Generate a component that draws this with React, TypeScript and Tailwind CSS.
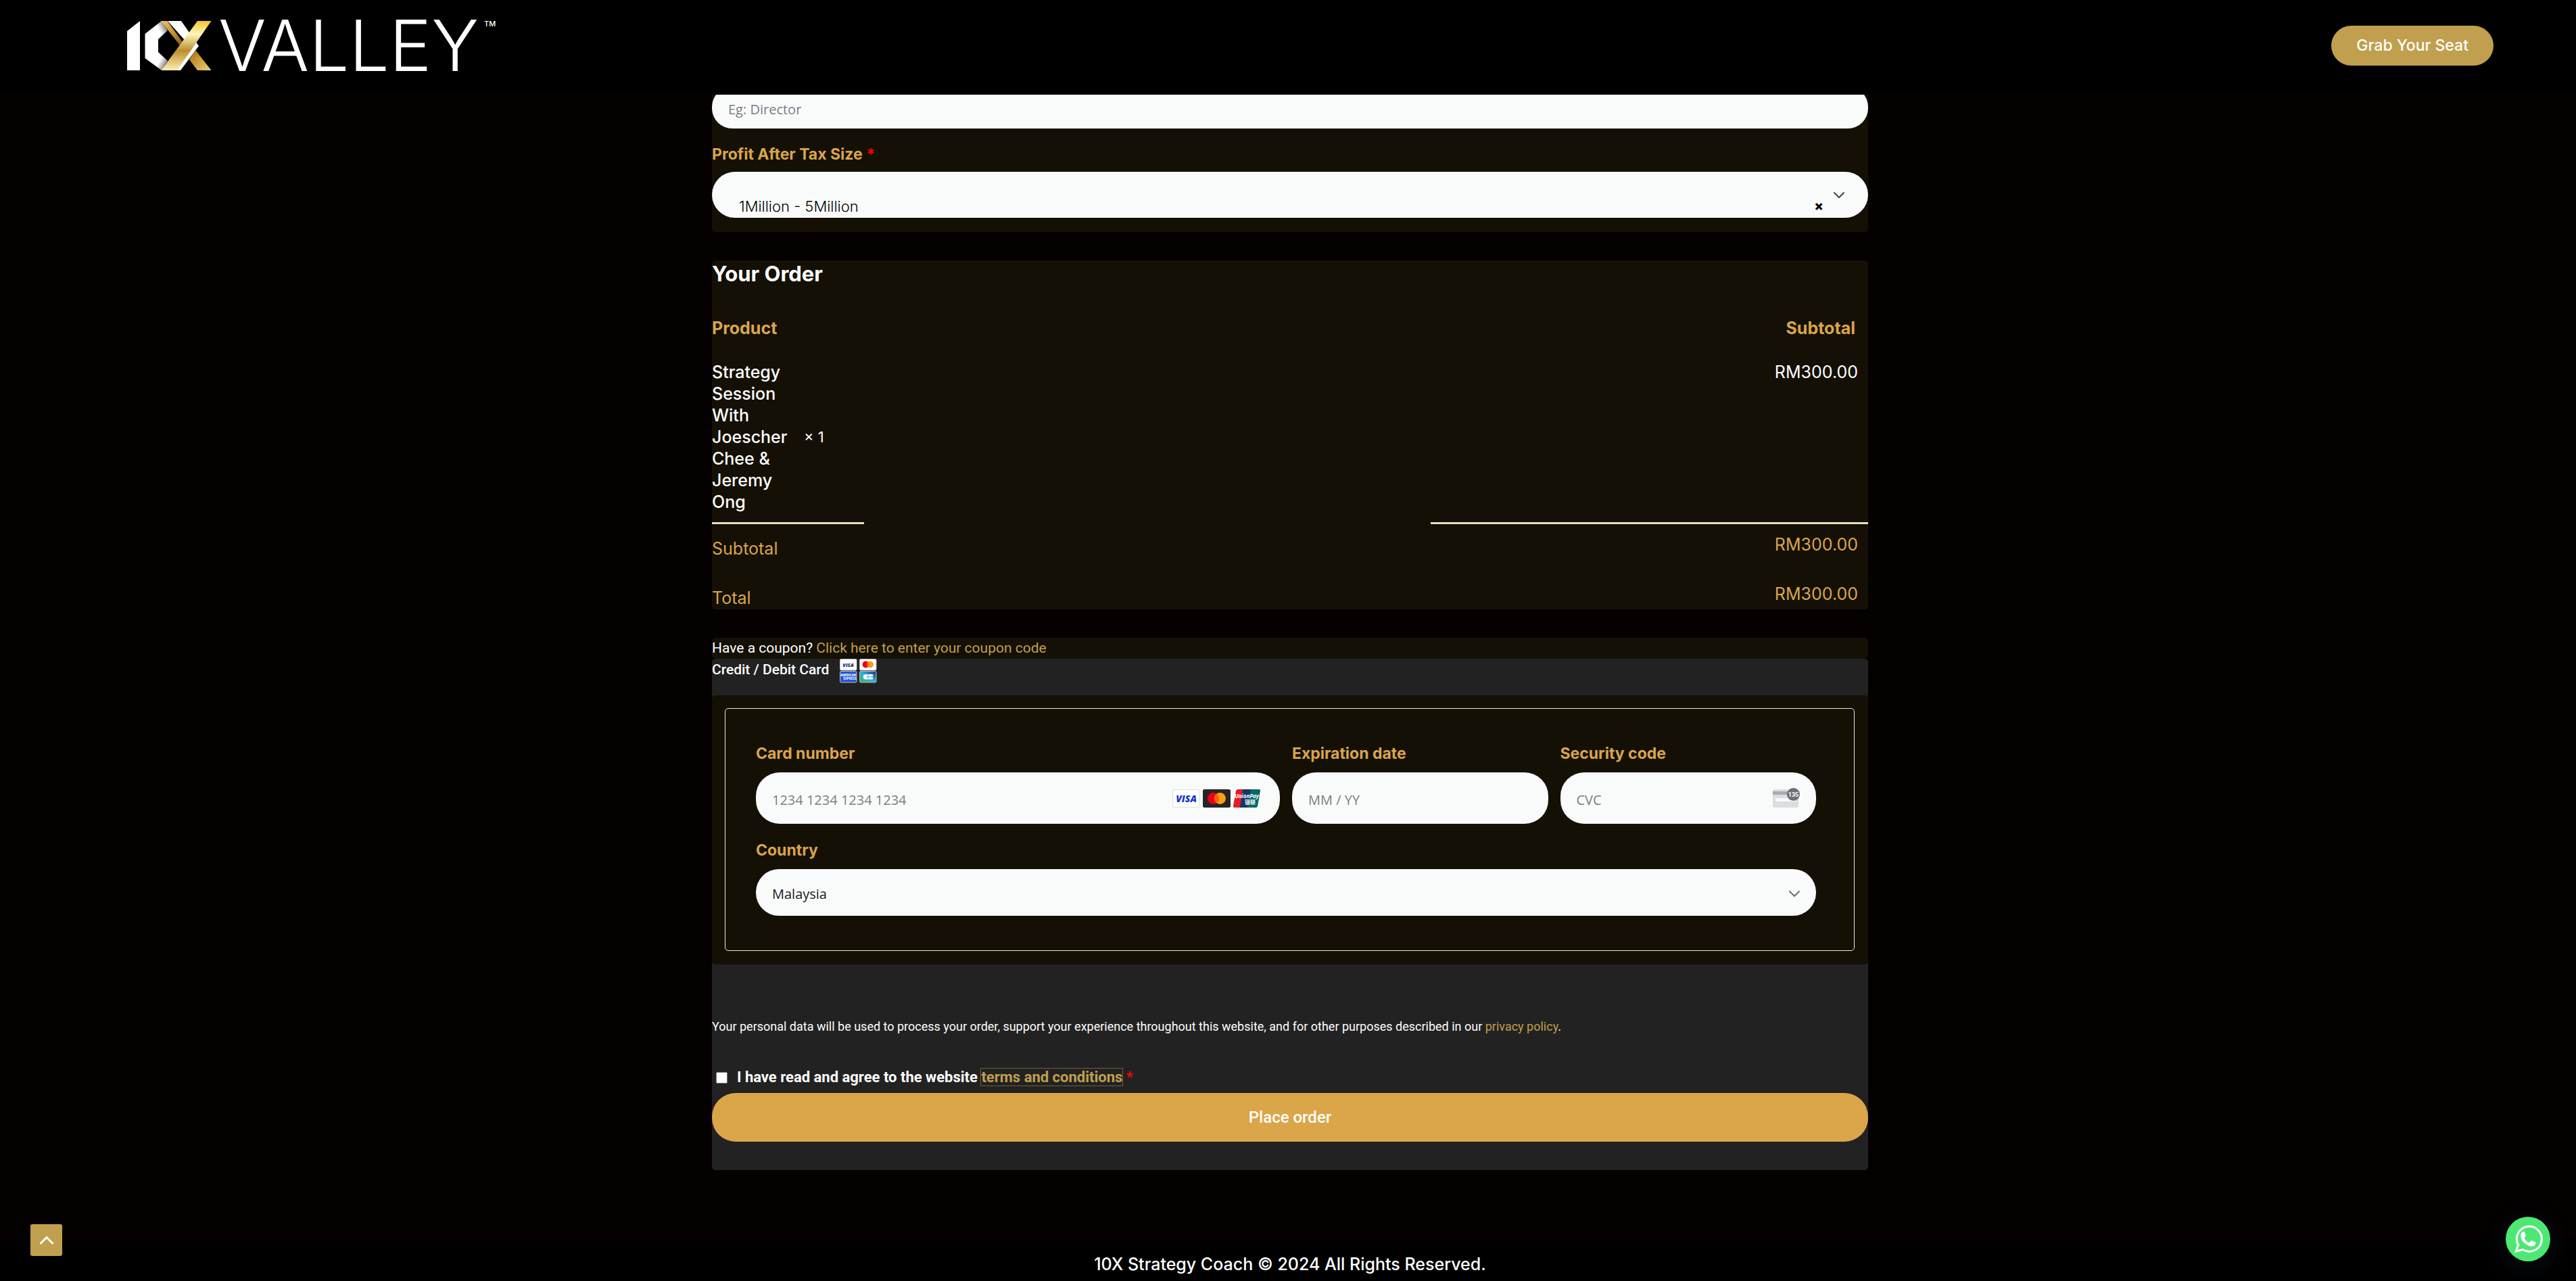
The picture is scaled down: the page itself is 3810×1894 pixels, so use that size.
import type { ReactNode } from "react";

const fieldClass =
  "w-full bg-[#f9fbfa] font-['Open_Sans',sans-serif] text-[20px] placeholder:text-[#7c7c86] outline-none";

function Logo() {
  return (
    <svg
      role="img"
      aria-label="10X Valley"
      viewBox="0 -31 580 140"
      className="h-[140px] w-[580px]"
    >
      <defs>
        <linearGradient id="goldBand" x1="0" y1="0" x2="0" y2="1">
          <stop offset="0" stopColor="#f6c62c" />
          <stop offset="0.27" stopColor="#fbf6bd" />
          <stop offset="0.6" stopColor="#bd8f2c" />
          <stop offset="1" stopColor="#fbf0b4" />
        </linearGradient>
        <linearGradient id="goldTop" x1="0" y1="0" x2="1" y2="1">
          <stop offset="0" stopColor="#e8c565" />
          <stop offset="0.6" stopColor="#bd8c2c" />
          <stop offset="1" stopColor="#7a4d1c" />
        </linearGradient>
        <linearGradient id="goldFoot" x1="0" y1="0" x2="1" y2="1">
          <stop offset="0" stopColor="#9a6a20" />
          <stop offset="0.4" stopColor="#c7952f" />
          <stop offset="1" stopColor="#ecd17a" />
        </linearGradient>
        <linearGradient id="foldTop" x1="0" y1="0.8" x2="1" y2="0.2">
          <stop offset="0.65" stopColor="#ffffff" />
          <stop offset="1" stopColor="#6d6468" />
        </linearGradient>
        <linearGradient id="foldBottom" x1="0" y1="0.2" x2="1" y2="0.8">
          <stop offset="0.65" stopColor="#ffffff" />
          <stop offset="1" stopColor="#6d6468" />
        </linearGradient>
      </defs>
      <path d="M0 15 L19 0 V73 H0Z" fill="#fff" />
      <path d="M26.500 19 L51 0 L60 14 L46 27 V37 H26.500Z" fill="url(#foldTop)" />
      <path d="M26.500 36.500 H46 V46 L60 59 L51 73 L26.500 55Z" fill="url(#foldBottom)" />
      <path d="M60 0 H80 L106 37 L79 73 H70 L92 36Z" fill="#fff" />
      <path d="M50 0 H59.500 L82 31 L78 36Z" fill="url(#goldTop)" />
      <path d="M101 43 L124.500 73 H104 L92 57Z" fill="url(#goldFoot)" />
      <path d="M104 0 H124.500 L74 73 H50.500Z" fill="url(#goldBand)" />
      <text x="135" y="74" fill="#fff" fontFamily="Inter, sans-serif" fontWeight="300" fontSize="105">
        VALLEY
      </text>
      <text x="528" y="8" fill="#fff" fontFamily="Inter, sans-serif" fontWeight="500" fontSize="11">
        TM
      </text>
    </svg>
  );
}

function Chevron({ className }: { className: string }) {
  return (
    <svg viewBox="0 0 16 10" className={className} fill="none" stroke="currentColor" strokeWidth="2" aria-hidden="true">
      <path d="M1 1 L8 8 L15 1" strokeLinecap="round" strokeLinejoin="round" />
    </svg>
  );
}

function AcceptedCards() {
  return (
    <svg viewBox="0 0 55 36" className="h-9 w-[55px]" role="img" aria-label="Visa, Mastercard, American Express, Cartes Bancaires">
      <defs>
        <linearGradient id="cb" x1="0" y1="1" x2="1" y2="0">
          <stop offset="0" stopColor="#3fae5a" />
          <stop offset="0.5" stopColor="#2bb3e0" />
          <stop offset="1" stopColor="#1c2f72" />
        </linearGradient>
      </defs>
      <g stroke="#b9bcc4" strokeWidth="1">
        <rect x="0.500" y="0.500" width="24.500" height="16.500" rx="1.500" fill="#fff" />
        <rect x="29.500" y="0.500" width="24.500" height="16.500" rx="1.500" fill="#fff" />
        <rect x="0.500" y="18.500" width="24.500" height="16.500" rx="1.500" fill="#2557d6" />
        <rect x="29.500" y="18.500" width="24.500" height="16.500" rx="1.500" fill="url(#cb)" />
      </g>
      <text x="12.500" y="11.500" textAnchor="middle" fontFamily="Open Sans, sans-serif" fontStyle="italic" fontWeight="800" fontSize="7.500" fill="#1a1f71">VISA</text>
      <circle cx="38.500" cy="8.500" r="5" fill="#eb001b" />
      <circle cx="45" cy="8.500" r="5" fill="#f79e1b" />
      <path d="M41.700 4.700a5 5 0 0 1 0 7.600a5 5 0 0 1 0-7.600Z" fill="#ff5f00" />
      <text x="12.500" y="25.500" textAnchor="middle" fontFamily="Roboto, sans-serif" fontWeight="700" fontSize="4.500" fill="#fff">AMERICAN</text>
      <text x="15" y="31" textAnchor="middle" fontFamily="Roboto, sans-serif" fontWeight="700" fontSize="4.500" fill="#fff">EXPRESS</text>
      <path d="M38.500 23h3v3.300h-2.500v1h2.500V30.500h-3a3.700 3.700 0 0 1 0-7.500Z" fill="#fff" />
      <path d="M42.300 23h5.500a1.600 1.600 0 0 1 0 3.300h-5.500ZM42.300 27.200h5.500a1.600 1.600 0 0 1 0 3.300h-5.500Z" fill="#fff" />
    </svg>
  );
}

function CardBrands() {
  return (
    <svg viewBox="0 0 130 27" className="h-[27px] w-[130px]" role="img" aria-label="Visa, Mastercard, UnionPay">
      <rect x="0.500" y="0.500" width="40" height="26" rx="2.500" fill="#fff" stroke="#dcdfe2" />
      <text x="20.500" y="19" textAnchor="middle" fontFamily="Open Sans, sans-serif" fontStyle="italic" fontWeight="800" fontSize="14" fill="#1434cb">VISA</text>
      <rect x="45" width="41" height="27" rx="2.500" fill="#252525" />
      <circle cx="60.500" cy="13.500" r="8.500" fill="#eb001b" />
      <circle cx="70.500" cy="13.500" r="8.500" fill="#f79e1b" />
      <path d="M65.500 6.600a8.500 8.500 0 0 1 0 13.800a8.500 8.500 0 0 1 0-13.800Z" fill="#ff5f00" />
      <path d="M96 0H106L101 27H92a2 2 0 0 1-2-2.500L94 2Z" fill="#e21e26" />
      <path d="M104 0H118L112 27H100Z" fill="#17356b" />
      <path d="M116 0H128a2 2 0 0 1 2 2.500L126 25a2.500 2.500 0 0 1-2.500 2H110.500Z" fill="#00696a" />
      <text x="110" y="13" textAnchor="middle" fontFamily="Open Sans, sans-serif" fontStyle="italic" fontWeight="700" fontSize="8" fill="#fff">UnionPay</text>
      <text x="115" y="21.500" textAnchor="middle" fontFamily="Noto Sans CJK SC, sans-serif" fontWeight="700" fontSize="8" fill="#fff">银联</text>
    </svg>
  );
}

function CvcHint() {
  return (
    <svg viewBox="0 0 40 30" className="h-[30px] w-10" aria-hidden="true">
      <rect y="2" width="38" height="27" rx="2.500" fill="#dcdde0" />
      <rect y="5" width="38" height="5" fill="#a9abb0" />
      <rect x="4" y="15" width="30" height="5" rx="1" fill="#f7f8f9" />
      <circle cx="30.500" cy="9.500" r="9.500" fill="#6d6e78" />
      <text x="30.500" y="13" textAnchor="middle" fontFamily="Roboto, sans-serif" fontWeight="700" fontSize="9" fill="#fff">135</text>
    </svg>
  );
}

function WhatsApp() {
  return (
    <svg viewBox="0 0 66 66" className="h-full w-full" fill="none" aria-hidden="true">
      <path
        d="M15.500 51 L18.500 41.500 A18.500 18.500 0 1 1 25 48.500 Z"
        stroke="#fff"
        strokeWidth="3"
        strokeLinejoin="miter"
      />
      <path
        d="M25.200 22.200c.8-.5 2-.5 2.500.4l2 4.600c.4 1-.1 1.900-2.400 4.300 1.600 3.200 4.600 5.700 7.800 7 2.200-2.900 2.800-3.600 3.900-3.200l4.800 2.300c.8.500.6 1.900 0 3.300-1.200 2.700-5.200 3.500-8.200 2.500-6.100-2-10.800-6.200-13-12.200-1.100-3.500-.2-7.200 2.600-9Z"
        fill="#fff"
      />
    </svg>
  );
}

function Field({ id, label, className, children }: { id: string; label: string; className: string; children: ReactNode }) {
  return (
    <div className={className}>
      <label htmlFor={id} className="mb-3 block text-[23px] leading-8 font-bold text-[#dba54a]">
        {label}
      </label>
      <div className="relative">{children}</div>
    </div>
  );
}

export default function App() {
  return (
    <div className="flex min-h-screen flex-col bg-[#050100] font-[Inter,sans-serif] text-white">
      <header className="sticky top-0 z-10 flex h-[140px] items-start justify-between bg-black pr-[122px] pl-[188px]">
        <a href="#home" className="block">
          <Logo />
        </a>
        <a
          href="#seat"
          className="mt-[38px] rounded-[30px] bg-[#c09f4e] px-[37px] text-[23px] leading-[59px] font-medium"
        >
          Grab Your Seat
        </a>
      </header>

      <main className="mx-auto -mt-3 w-full max-w-[1716px] grow pb-[105px] pl-[6px]">
        <form onSubmit={(event) => event.preventDefault()}>
          <section className="rounded-b-[5px] bg-[#141005] pb-[21px]">
            <input
              aria-label="Position"
              placeholder="Eg: Director"
              className={`${fieldClass} h-[62px] rounded-[30px] px-6 pt-1`}
            />
            <label htmlFor="profit" className="mt-[22px] mb-[10px] block text-[23px] leading-8 font-bold text-[#dba54a]">
              Profit After Tax Size <span className="text-[#ff0000]">*</span>
            </label>
            <div className="relative">
              <select
                id="profit"
                defaultValue="1-5"
                className="block h-[68px] w-full appearance-none rounded-[34px] bg-[#f9fbfa] pt-[34px] pr-24 pl-10 text-[22px] font-light text-black outline-none"
              >
                <option value="1-5">1Million - 5Million</option>
              </select>
              <button
                type="button"
                aria-label="Clear selection"
                className="absolute right-[66px] bottom-[6px] text-[20px] leading-6 font-extrabold text-black"
              >
                ×
              </button>
              <Chevron className="pointer-events-none absolute top-[30px] right-[35px] h-[10px] w-4 text-[#444]" />
            </div>
          </section>

          <section className="mt-[42px] rounded-[5px] bg-[#141005]">
            <h3 className="text-[31px] leading-10 font-bold">Your Order</h3>
            <table className="w-full table-fixed border-separate border-spacing-0 text-[25px] leading-8">
              <colgroup>
                <col className="w-[225px]" />
                <col />
                <col className="w-[647px]" />
              </colgroup>
              <thead className="text-[#dba54a]">
                <tr>
                  <th className="pt-11 text-left font-bold">Product</th>
                  <td />
                  <th className="pt-11 pr-[19px] text-right font-bold">Subtotal</th>
                </tr>
              </thead>
              <tbody className="font-medium">
                <tr>
                  <td className="border-b-3 border-[#ebdfc0] pt-[33px] pb-[14px]">
                    <div className="flex items-center gap-4">
                      <span className="w-[120px]">Strategy Session With Joescher Chee &amp; Jeremy Ong</span>
                      <span className="text-[22px] font-normal">× 1</span>
                    </div>
                  </td>
                  <td />
                  <td className="border-b-3 border-[#ebdfc0] pt-[33px] pr-[15px] text-right align-top font-normal">
                    RM300.00
                  </td>
                </tr>
              </tbody>
              <tfoot className="text-[#dba54a]">
                <tr className="h-[73px] align-top">
                  <th className="pt-5 text-left font-normal">Subtotal</th>
                  <td />
                  <td className="pt-[14px] pr-[15px] text-right">RM300.00</td>
                </tr>
                <tr className="h-[53px] align-top">
                  <th className="pt-5 text-left font-normal">Total</th>
                  <td />
                  <td className="pt-[14px] pr-[15px] text-right">RM300.00</td>
                </tr>
              </tfoot>
            </table>
          </section>

          <section className="mt-[42px] font-[Roboto,sans-serif]">
            <p className="rounded-[5px] bg-[#141005] text-[21px] leading-[31px]">
              Have a coupon?{" "}
              <a href="#coupon" className="text-[#c09f4e]">
                Click here to enter your coupon code
              </a>
            </p>
            <div className="rounded-[5px] bg-[#222222]">
              <div className="flex h-[54px] items-start gap-4 text-[21px] leading-8 font-medium">
                <span>Credit / Debit Card</span>
                <AcceptedCards />
              </div>

              <div className="rounded-[5px] bg-[#141005] pt-[19px] pr-5 pb-5 pl-[19px]">
                <fieldset className="grid grid-cols-4 gap-x-[18px] gap-y-[23px] rounded-[5px] border border-[#f5e8c4] pt-[50px] pr-14 pb-[51px] pl-[45px] font-[Inter,sans-serif]">
                  <Field id="card-number" label="Card number" className="col-span-2">
                    <input
                      id="card-number"
                      placeholder="1234 1234 1234 1234"
                      className={`${fieldClass} block h-[76px] rounded-[35px] pt-1 pr-44 pl-6 text-black`}
                    />
                    <div className="absolute top-[25px] right-[29px]">
                      <CardBrands />
                    </div>
                  </Field>
                  <Field id="expiry" label="Expiration date" className="col-span-1">
                    <input
                      id="expiry"
                      placeholder="MM / YY"
                      className={`${fieldClass} block h-[76px] rounded-[35px] px-6 pt-1 text-black`}
                    />
                  </Field>
                  <Field id="cvc" label="Security code" className="col-span-1">
                    <input
                      id="cvc"
                      placeholder="CVC"
                      className={`${fieldClass} block h-[76px] rounded-[35px] pt-1 pr-20 pl-6 text-black`}
                    />
                    <div className="absolute top-[23px] right-[24px]">
                      <CvcHint />
                    </div>
                  </Field>
                  <Field id="country" label="Country" className="col-span-4">
                    <select
                      id="country"
                      defaultValue="MY"
                      className={`${fieldClass} block h-[69px] appearance-none rounded-[34px] px-6 pt-1 text-[#1a1a1a]`}
                    >
                      <option value="MY">Malaysia</option>
                    </select>
                    <Chevron className="pointer-events-none absolute top-8 right-6 h-[10px] w-4 text-[#6d6e78]" />
                  </Field>
                </fieldset>
              </div>

              <div className="pt-[78px] pb-[42px]">
                <p className="text-[18px] leading-7">
                  Your personal data will be used to process your order, support your experience throughout this
                  website, and for other purposes described in our{" "}
                  <a href="#privacy" className="text-[#c09f4e]">
                    privacy policy
                  </a>
                  .
                </p>
                <div className="mt-[45px] flex items-center gap-[14px] pl-[6px] text-[22px] leading-8 font-bold">
                  <input id="terms" type="checkbox" className="size-[17px]" />
                  <label htmlFor="terms">
                    I have read and agree to the website{" "}
                    <a href="#terms" className="text-[#c09f4e] outline-1 outline-[#c09f4e] outline-dotted">
                      terms and conditions
                    </a>{" "}
                    <span className="text-[#ff0000]">*</span>
                  </label>
                </div>
                <button
                  type="submit"
                  className="mt-[7px] block h-[72px] w-full rounded-[35px] bg-[#dba54a] text-[24px] font-medium"
                >
                  Place order
                </button>
              </div>
            </div>
          </section>
        </form>
      </main>

      <footer className="bg-black pt-[18px] pb-[9px] pl-[6px] text-center text-[25px] leading-8 font-medium">
        10X Strategy Coach © 2024 All Rights Reserved.
      </footer>

      <button
        type="button"
        aria-label="Back to top"
        className="fixed bottom-[37px] left-[45px] z-20 flex size-[47px] items-center justify-center rounded-[3px] bg-[#c09f4e]"
      >
        <svg viewBox="0 0 22 14" className="h-[14px] w-[22px]" fill="none" stroke="#fff" strokeWidth="3" aria-hidden="true">
          <path d="M1.500 12 L11 2.500 L20.500 12" />
        </svg>
      </button>
      <a
        href="#whatsapp"
        aria-label="Chat on WhatsApp"
        className="fixed right-[38px] bottom-[29px] z-20 block size-[66px] rounded-full bg-[#4de874] shadow-[0_6px_32px_6px_rgba(32,60,80,0.22)]"
      >
        <WhatsApp />
      </a>
    </div>
  );
}
